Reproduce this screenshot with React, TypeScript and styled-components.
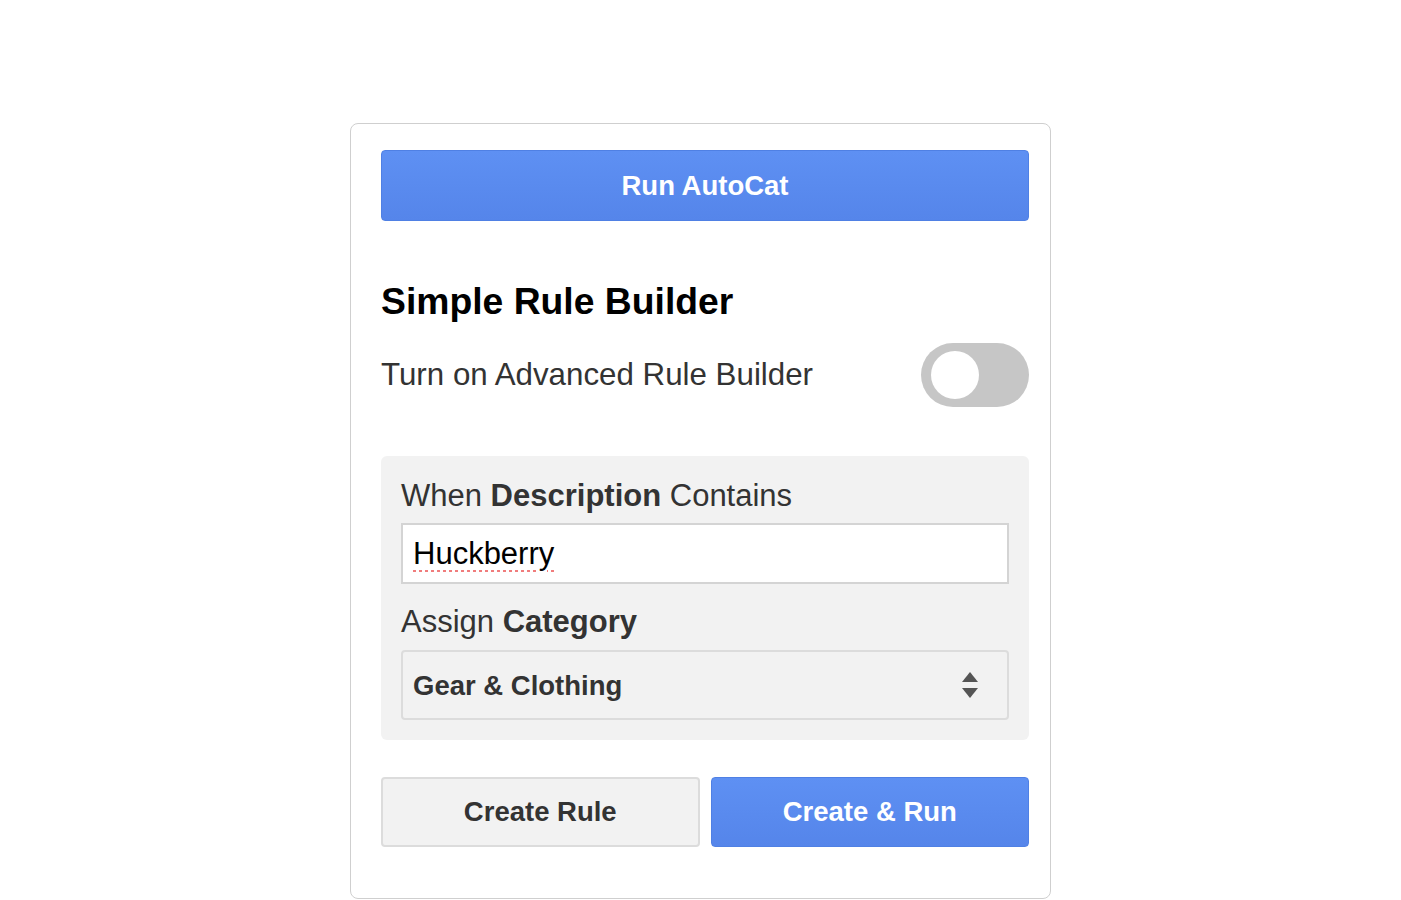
import React from "react";
import styled, { createGlobalStyle } from "styled-components";

const Global = createGlobalStyle`
  html, body { margin: 0; padding: 0; background: #ffffff; }
  body { font-family: "Liberation Sans", Arial, sans-serif; }
  * { box-sizing: border-box; }
`;

const Page = styled.div`
  display: flex;
  justify-content: center;
  padding-top: 123px;
`;

const Card = styled.div`
  width: 701px;
  border: 1px solid #cfcfcf;
  border-radius: 8px;
  padding: 26px 21px 51px 30px;
  display: flex;
  flex-direction: column;
`;

const BlueButton = styled.button<{ $height: number }>`
  height: ${(p) => p.$height}px;
  width: 100%;
  border: 1px solid #4f80e4;
  border-radius: 4px;
  background: linear-gradient(#5e90f3, #5585ea);
  color: #ffffff;
  font-family: "Liberation Sans", Arial, sans-serif;
  font-weight: 700;
  font-size: 27.5px;
  cursor: pointer;
`;

const GreyButton = styled.button`
  height: 70px;
  width: 100%;
  border: 2px solid #dcdcdc;
  border-radius: 4px;
  background: #f2f2f2;
  color: #333333;
  font-family: "Liberation Sans", Arial, sans-serif;
  font-weight: 700;
  font-size: 27.5px;
  cursor: pointer;
`;

const Heading = styled.h2`
  margin: 60px 0 22px;
  font-size: 37.3px;
  line-height: 40px;
  font-weight: 700;
  color: #000000;
`;

const ToggleRow = styled.div`
  display: flex;
  align-items: center;
  justify-content: space-between;
  height: 64px;
`;

const ToggleText = styled.span`
  font-size: 31.3px;
  color: #333333;
`;

const Toggle = styled.div`
  width: 108px;
  height: 64px;
  border-radius: 32px;
  background: #c6c6c6;
  display: flex;
  align-items: center;
  padding-left: 10px;
`;

const Knob = styled.div`
  width: 48px;
  height: 48px;
  border-radius: 50%;
  background: #ffffff;
`;

const Panel = styled.div`
  margin-top: 49px;
  background: #f2f2f2;
  border-radius: 6px;
  padding: 22px 20px 20px;
  display: flex;
  flex-direction: column;
`;

const Label = styled.div<{ $top: number }>`
  margin-top: ${(p) => p.$top}px;
  font-size: 31px;
  line-height: 36px;
  color: #333333;
  b { font-weight: 700; }
`;

const TextInput = styled.input`
  margin-top: 9px;
  height: 61px;
  width: 100%;
  border: 2px solid #d4d4d4;
  background: #ffffff;
  padding: 0 10px;
  font-family: "Liberation Sans", Arial, sans-serif;
  font-size: 31px;
  color: #000000;
  outline: none;
  text-decoration: underline dotted #f07c7c;
  text-decoration-thickness: 3px;
  text-underline-offset: 6px;
`;

const SelectWrap = styled.div`
  position: relative;
  margin-top: 10px;
`;

const Select = styled.select`
  appearance: none;
  width: 100%;
  height: 70px;
  border: 2px solid #dcdcdc;
  border-radius: 4px;
  background: #f2f2f2;
  padding: 0 10px;
  font-family: "Liberation Sans", Arial, sans-serif;
  font-weight: 700;
  font-size: 27.5px;
  color: #333333;
  outline: none;
`;

const Arrows = styled.svg`
  position: absolute;
  right: 30px;
  top: 50%;
  transform: translateY(-50%);
  pointer-events: none;
`;

const ButtonRow = styled.div`
  margin-top: 37px;
  display: grid;
  grid-template-columns: 1fr 1fr;
  gap: 11px;
`;

export default function App() {
  return (
    <>
      <Global />
      <Page>
        <Card>
          <BlueButton $height={71}>Run AutoCat</BlueButton>
          <Heading>Simple Rule Builder</Heading>
          <ToggleRow>
            <ToggleText>Turn on Advanced Rule Builder</ToggleText>
            <Toggle>
              <Knob />
            </Toggle>
          </ToggleRow>
          <Panel>
            <Label $top={0}>
              When <b>Description</b> Contains
            </Label>
            <TextInput defaultValue="Huckberry" />
            <Label $top={20}>
              Assign <b>Category</b>
            </Label>
            <SelectWrap>
              <Select defaultValue="gear">
                <option value="gear">Gear &amp; Clothing</option>
              </Select>
              <Arrows width="18" height="28" viewBox="0 0 18 28">
                <path d="M9 1 L17 11 L1 11 Z" fill="#555555" />
                <path d="M1 17 L17 17 L9 27 Z" fill="#555555" />
              </Arrows>
            </SelectWrap>
          </Panel>
          <ButtonRow>
            <GreyButton>Create Rule</GreyButton>
            <BlueButton $height={70}>Create &amp; Run</BlueButton>
          </ButtonRow>
        </Card>
      </Page>
    </>
  );
}
